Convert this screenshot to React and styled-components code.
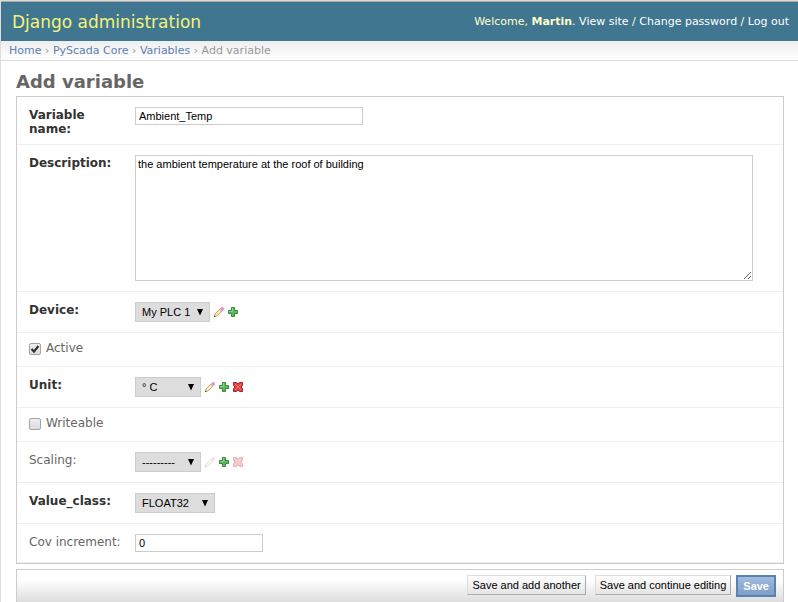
import React, { useId } from "react";
import styled, { createGlobalStyle, css } from "styled-components";

const GlobalStyle = createGlobalStyle`
  * { box-sizing: border-box; }
  body {
    margin: 0;
    background: #fff;
    color: #333;
    font: 12px/14px "DejaVu Sans", sans-serif;
  }
`;

const controlFont = css`
  font: 11px/14px "Liberation Sans", Arial, sans-serif;
  color: #000;
`;

const Page = styled.div`
  border-left: 1px solid #ddd;
  border-top: 1px solid #ddd;
`;

const Header = styled.header`
  display: flex;
  align-items: center;
  justify-content: space-between;
  height: 40px;
  padding: 0 9px 0 11px;
  border-top: 1px solid #aaa;
  background: #417690;
  color: #ffc;
`;

const SiteName = styled.h1`
  margin: 0;
  font-size: 17px;
  line-height: 22px;
  font-weight: normal;
  color: #f4f379;
`;

const UserTools = styled.nav`
  font-size: 11px;
  line-height: 14px;
  white-space: nowrap;

  a {
    color: #fff;
    text-decoration: none;
  }
`;

const Breadcrumbs = styled.nav`
  height: 20px;
  padding: 3px 8px 2px;
  border-bottom: 1px solid #ddd;
  background: linear-gradient(#eee, #fff);
  font-size: 11px;
  line-height: 14px;
  color: #999;

  a {
    color: #5b80b2;
    text-decoration: none;
  }
`;

const Content = styled.main`
  padding: 10px 14px 0 15px;
`;

const PageTitle = styled.h2`
  margin: 0 0 4px;
  font-size: 18px;
  line-height: 21px;
  color: #666;
`;

const Module = styled.section`
  margin-bottom: 5px;
  border: 1px solid #ccc;
`;

const Row = styled.div`
  display: flex;
  align-items: flex-start;
  padding: 10px 12px;
  border-bottom: 1px solid #eee;
`;

const FieldLabel = styled.label`
  flex: 0 0 106px;
  padding: 1px 10px 0 0;
  margin-bottom: -2px;
  font-weight: ${(p) => (p.$required ? "bold" : "normal")};
  color: ${(p) => (p.$required ? "#333" : "#666")};
`;

const TextInput = styled.input`
  ${controlFont}
  width: ${(p) => (p.$wide ? "228px" : "128px")};
  height: 18px;
  padding: 2px 3px;
  border: 1px solid #ccc;
  background: #fff;
`;

const TextArea = styled.textarea`
  ${controlFont}
  display: block;
  flex: 0 1 618px;
  height: 126px;
  padding: 1px 2px;
  border: 1px solid #ccc;
`;

const Controls = styled.div`
  display: flex;
  align-items: center;
  gap: 4px;
`;

const SelectBox = styled.span`
  position: relative;
  display: block;
  width: ${(p) => p.$width}px;

  svg {
    position: absolute;
    right: 7px;
    top: 6px;
    pointer-events: none;
  }
`;

const Select = styled.select`
  ${controlFont}
  appearance: none;
  display: block;
  width: 100%;
  height: 20px;
  padding: 2px 16px 2px 6px;
  border: 1px solid #ccc;
  border-radius: 0;
  background: #ddd;
`;

const IconLink = styled.a`
  display: block;
  width: 10px;
  height: 10px;
  opacity: ${(p) => (p.$disabled ? 0.3 : 1)};

  svg { display: block; }
`;

const CheckRow = styled(Row)`
  height: 34px;
  gap: 5px;
`;

const CheckBox = styled.span`
  position: relative;
  flex: none;
  width: 12px;
  height: 12px;

  svg {
    position: absolute;
    inset: 0;
    pointer-events: none;
    visibility: hidden;
  }

  input:checked + svg { visibility: visible; }
`;

const CheckInput = styled.input`
  appearance: none;
  display: block;
  width: 12px;
  height: 12px;
  margin: 0;
  border: 1px solid #a4a4a4;
  border-radius: 2px;
  background: linear-gradient(#eee, #dcdcdc);
`;

const CheckLabel = styled.label`
  margin-top: -2px;
  color: #666;
`;

const SubmitRow = styled.div`
  display: flex;
  justify-content: flex-end;
  align-items: flex-start;
  height: 33px;
  padding: 5px 7px;
  border: 1px solid #ccc;
  border-bottom: 0;
  background: linear-gradient(#fff 30%, #ddd);
`;

const Button = styled.button`
  ${controlFont}
  height: 20px;
  margin-right: 9px;
  padding: 2px 4px;
  border: 1px solid;
  border-color: #ddd #aaa #aaa #ddd;
  background: linear-gradient(#fff, #e4e4e4);
  white-space: nowrap;

  & + & { margin-right: 5px; }
`;

const PrimaryButton = styled.button`
  ${controlFont}
  height: 22px;
  padding: 2px 5px;
  border: 2px solid #5b80b2;
  background: linear-gradient(#a0bbdc, #7ca0c7);
  font-weight: bold;
  color: #fff;
`;

const PencilIcon = () => (
  <svg width="10" height="10" viewBox="0 0 10 10" aria-hidden="true">
    <path d="M.5 9.5 1 7 5.6 2.4 7.6 4.4 3 9Z" fill="#fbe7a2" stroke="#b9935a" strokeWidth="0.8" />
    <path d="M2 8 6.6 3.4" stroke="#fff6cf" strokeWidth="1" />
    <path d="M5.4 2.4 6.6 1.2 8.8 3.4 7.6 4.6Z" fill="#b9b4c8" />
    <path d="M6.4 1.4 7.6 .3H9L9.8 1.1V2.4L8.6 3.6Z" fill="#f08ae0" stroke="#d683c8" strokeWidth="0.4" />
    <path d="M0 10V8.4L1.6 10Z" fill="#333" />
  </svg>
);

const PlusIcon = () => (
  <svg width="10" height="10" viewBox="0 0 10 10" aria-hidden="true">
    <path d="M3.5.5h3v3h3v3h-3v3h-3v-3h-3v-3h3z" fill="#5fb85c" stroke="#368a3b" />
    <path d="M4.5 1v3.5H1" fill="none" stroke="#8fd087" />
  </svg>
);

const CrossIcon = () => (
  <svg width="10" height="10" viewBox="0 0 10 10" aria-hidden="true">
    <path
      d="M.5.5h3L5 2 6.500.5h3v3L8 5l1.500 1.500v3h-3L5 8 3.500 9.500h-3v-3L2 5 .5 3.500z"
      fill="#dd4448"
      stroke="#b01c26"
    />
    <path d="M2 2l6 6M8 2L2 8" stroke="#f0716f" />
  </svg>
);

const icons = {
  Change: PencilIcon,
  Add: PlusIcon,
  Delete: CrossIcon,
};

function SelectField({ label, required, value, width, actions = [], disabled = [] }) {
  const id = useId();
  return (
    <Row>
      <FieldLabel htmlFor={id} $required={required}>{label}:</FieldLabel>
      <Controls>
        <SelectBox $width={width}>
          <Select id={id} defaultValue={value}>
            <option>{value}</option>
          </Select>
          <svg width="6" height="8" viewBox="0 0 6 8" aria-hidden="true">
            <path d="M0 1h6L3 7.500Z" fill="#000" />
          </svg>
        </SelectBox>
        {actions.map((action) => {
          const Icon = icons[action];
          return (
            <IconLink
              key={action}
              href="#"
              aria-label={`${action} ${label}`}
              $disabled={disabled.includes(action)}
            >
              <Icon />
            </IconLink>
          );
        })}
      </Controls>
    </Row>
  );
}

function TextField({ label, required, value, wide }) {
  const id = useId();
  return (
    <Row>
      <FieldLabel htmlFor={id} $required={required}>{label}:</FieldLabel>
      <TextInput id={id} type="text" defaultValue={value} $wide={wide} />
    </Row>
  );
}

function CheckField({ label, checked }) {
  const id = useId();
  return (
    <CheckRow>
      <CheckBox>
        <CheckInput id={id} type="checkbox" defaultChecked={checked} />
        <svg width="12" height="12" viewBox="0 0 12 12" aria-hidden="true">
          <path d="M2.500 6 5 8.600 9.400 3" fill="none" stroke="#333" strokeWidth="2.200" />
        </svg>
      </CheckBox>
      <CheckLabel htmlFor={id}>{label}</CheckLabel>
    </CheckRow>
  );
}

export default function App() {
  return (
    <Page>
      <GlobalStyle />
      <Header>
        <SiteName>Django administration</SiteName>
        <UserTools>
          Welcome, <strong>Martin</strong>. <a href="#">View site</a> / <a href="#">Change password</a> /{" "}
          <a href="#">Log out</a>
        </UserTools>
      </Header>
      <Breadcrumbs>
        <a href="#">Home</a> › <a href="#">PyScada Core</a> › <a href="#">Variables</a> › Add variable
      </Breadcrumbs>
      <Content>
        <PageTitle>Add variable</PageTitle>
        <form onSubmit={(e) => e.preventDefault()}>
          <Module>
            <TextField label="Variable name" required value="Ambient_Temp" wide />
            <Row>
              <FieldLabel htmlFor="description" $required>Description:</FieldLabel>
              <TextArea id="description" defaultValue="the ambient temperature at the roof of building" />
            </Row>
            <SelectField label="Device" required value="My PLC 1" width={75} actions={["Change", "Add"]} />
            <CheckField label="Active" checked />
            <SelectField label="Unit" required value="° C" width={66} actions={["Change", "Add", "Delete"]} />
            <CheckField label="Writeable" />
            <SelectField
              label="Scaling"
              value="---------"
              width={66}
              actions={["Change", "Add", "Delete"]}
              disabled={["Change", "Delete"]}
            />
            <SelectField label="Value_class" required value="FLOAT32" width={80} />
            <TextField label="Cov increment" value="0" />
          </Module>
          <SubmitRow>
            <Button type="submit">Save and add another</Button>
            <Button type="submit">Save and continue editing</Button>
            <PrimaryButton type="submit">Save</PrimaryButton>
          </SubmitRow>
        </form>
      </Content>
    </Page>
  );
}
